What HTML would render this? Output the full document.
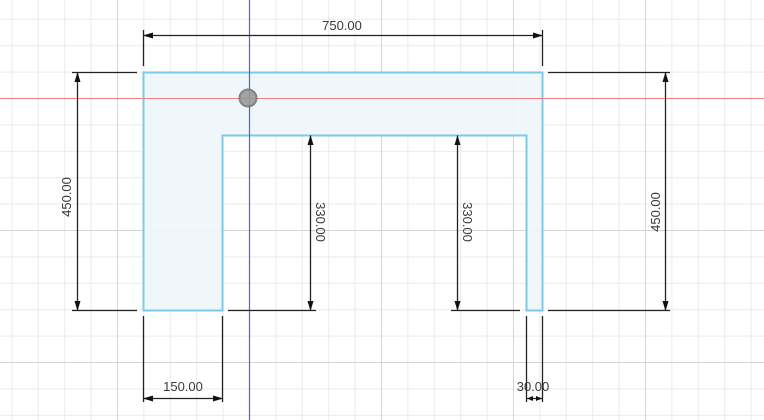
<!DOCTYPE html><html><head><style>body{margin:0;background:#fff}svg{display:block}text{font-family:"Liberation Sans",sans-serif;font-size:13px;fill:#3a3a3a}</style></head><body>
<svg width="764" height="420" xmlns="http://www.w3.org/2000/svg">
<defs>
<pattern id="mn" x="11.4" y="18.8" width="26.4" height="26.4" patternUnits="userSpaceOnUse">
<path d="M0.5 0V26.4M0 0.5H26.4" stroke="#ebebeb" stroke-width="1" fill="none"/>
</pattern>
<pattern id="mj" x="117" y="98" width="132" height="132" patternUnits="userSpaceOnUse">
<path d="M0.5 0V132M0 0.5H132" stroke="#d4d4d4" stroke-width="1" fill="none"/>
</pattern>
</defs>
<rect width="764" height="420" fill="url(#mn)"/>
<rect width="764" height="420" fill="url(#mj)"/>
<path d="M143.5 72.5H542.5V310.5H526.5V135.5H222.5V310.5H143.5Z" fill="#eef6fb" fill-opacity="0.9" stroke="#7ec8ea" stroke-width="2"/>
<line x1="0" y1="98.5" x2="764" y2="98.5" stroke="#f08080" stroke-width="1"/>
<line x1="249.5" y1="0" x2="249.5" y2="420" stroke="#5a5af0" stroke-width="1.2"/>
<circle cx="248" cy="98" r="8.5" fill="#999" stroke="#777" stroke-width="2" opacity="0.9"/>
<g stroke="#222" stroke-width="1.3" fill="none">
<path d="M143.5 30V66M542.5 30V66M143.5 35.5H542.5"/>
<path d="M72 72.5H137M72 310.5H137M77.5 72.5V310.5"/>
<path d="M548 72.5H670M548 310.5H670M665.5 72.5V310.5"/>
<path d="M228 310.5H316M310.5 135.5V310.5"/>
<path d="M451 310.5H520M457.5 135.5V310.5"/>
<path d="M143.5 316V402M222.5 316V402M143.5 398.5H222.5"/>
<path d="M526.5 316V402M542.5 316V402M526.5 398.5H542.5"/>
</g>
<g fill="#111">
<path d="M143 35.5l10-3v6z"/><path d="M543 35.5l-10-3v6z"/>
<path d="M77.5 72l-3 10h6z"/><path d="M77.5 311l-3-10h6z"/>
<path d="M665.5 72l-3 10h6z"/><path d="M665.5 311l-3-10h6z"/>
<path d="M310.5 135l-3 10h6z"/><path d="M310.5 311l-3-10h6z"/>
<path d="M457.5 135l-3 10h6z"/><path d="M457.5 311l-3-10h6z"/>
<path d="M143 398.5l10-3v6z"/><path d="M223 398.5l-10-3v6z"/>
<path d="M527 398.5l6-2.5v5z"/><path d="M542 398.5l-6-2.5v5z"/>
</g>
<text x="342" y="30" text-anchor="middle">750.00</text>
<text transform="translate(71,197) rotate(-90)" text-anchor="middle">450.00</text>
<text transform="translate(660,212) rotate(-90)" text-anchor="middle">450.00</text>
<text transform="translate(316,222) rotate(90)" text-anchor="middle">330.00</text>
<text transform="translate(463,222) rotate(90)" text-anchor="middle">330.00</text>
<text x="183" y="391" text-anchor="middle">150.00</text>
<text x="533" y="391" text-anchor="middle">30.00</text>
</svg></body></html>
